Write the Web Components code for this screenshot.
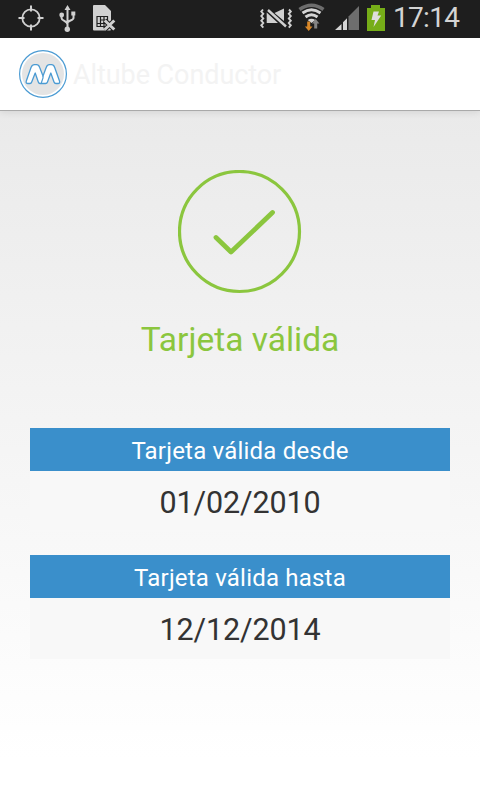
<!DOCTYPE html>
<html lang="es">
<head>
<meta charset="utf-8">
<title>Altube Conductor</title>
<style>
html,body{margin:0;height:100%}
body{font-family:Roboto,"Noto Sans",sans-serif;overflow:hidden}
</style>
</head>
<body>
<conductor-app></conductor-app>
<script>
const define = (name, html) => customElements.define(name, class extends HTMLElement {
  constructor() {
    super();
    this.attachShadow({mode: 'open'}).innerHTML = html;
  }
});

define('status-bar', `
<style>
:host{display:flex;justify-content:space-between;height:38px;background:#1e1e1e;color:#d4d4d4}
svg{display:block;flex:none}
.right{display:flex}
time{font-size:28px;line-height:36px;width:87px;box-sizing:border-box;letter-spacing:-.7px;white-space:nowrap}
</style>
<svg width="130" height="38" viewBox="0 0 130 38" fill="none" stroke="#d0d0d0">
  <circle cx="31" cy="18" r="8.700" stroke-width="1.800"/>
  <path d="M31 5.500v6M31 24.500v6M18.500 18h6M37.500 18h6" stroke-width="2"/>
  <path d="M67.500 9v20M61.500 15v3c0 3 6 3 6 6.500M73.500 14v4c0 2.500-6 2.500-6 5" stroke-width="2"/>
  <path d="M67.500 5l3 5h-6zM71.300 11.500h4v4h-4z" fill="#d0d0d0" stroke="none"/>
  <circle cx="61.700" cy="15" r="2.400" fill="#d0d0d0" stroke="none"/>
  <circle cx="67.300" cy="29.300" r="2.700" fill="#d0d0d0" stroke="none"/>
  <path d="M93 6q0-1 1-1h11l6 6v18q0 1.500-1 1.500H94q-1 0-1-1z" fill="#d0d0d0" stroke="none"/>
  <path d="M97 16.500h10.500v10H97zM100.500 16.500v10M104 16.500v10M100.500 20h7M97 23.500h10" stroke="#1e1e1e" stroke-width="1.200"/>
  <path d="M104.800 20.500l9.500 9M114.300 20.500l-9.500 9" stroke="#1e1e1e" stroke-width="5"/>
  <path d="M104.800 20.500l9.500 9M114.300 20.500l-9.500 9" stroke="#d0d0d0" stroke-width="3"/>
</svg>
<div class="right">
<svg width="136" height="38" viewBox="257 0 136 38" fill="none">
  <path d="M263 9.500l-1.700 2 2 2.300-2 2.300 2 2.300-2 2.300 2 2.300-2 2.300 2 2.400M289 9.500l1.800 2-2 2.300 2 2.300-2 2.300 2 2.300-2 2.300 2 2.300-2 2.400" stroke="#cfcfcf" stroke-width="1.900"/>
  <path d="M268 10l18 16.500" stroke="#d0d0d0" stroke-width="2.400"/>
  <path d="M266.700 12.500l11.300 10.500h-11.300zM274.500 13l9.500-4.500v12.500z" fill="#d0d0d0"/>
  <path d="M299.500 9.500Q311.500 1 323.500 9.500" stroke="#6d6d6d" stroke-width="3.600"/>
  <path d="M302.500 13Q311.500 6.500 320.500 13M305.500 17Q311.500 12.500 317.500 17" stroke="#d4d4d4" stroke-width="2.900"/>
  <path d="M307.700 20q3.800-2.700 7.600 0L311.500 23z" fill="#d4d4d4"/>
  <path d="M307.200 21.500h3v5h2.300l-3.800 4.500-3.800-4.500h2.300z" fill="#d98828"/>
  <path d="M314.200 28.500h3v-5h2.200l-3.700-4.500-3.700 4.500h2.200z" fill="#858585"/>
  <path d="M348.500 16.500L359 6v24h-10.500z" fill="#6e6e6e"/>
  <path d="M335 30l6.500-6v6zM343 22.300l4-4V30h-4z" fill="#d4d4d4"/>
  <path d="M371 5h9v3h5v23h-18V8h4z" fill="#76ad18"/>
  <path d="M373.500 11.500h5.500l-1.500 4h3.700l-7.700 11.500 1.500-7h-3.500z" fill="#dedede"/>
</svg>
<time>17:14</time>
</div>`);

define('app-logo', `
<style>:host{display:block;width:48px;height:48px}svg{display:block}</style>
<svg width="48" height="48" viewBox="0 0 48 48">
  <circle cx="24" cy="24" r="23.400" fill="#fff" stroke="#4b9bd3" stroke-width="1.200"/>
  <circle cx="24" cy="24" r="21" fill="#e4e4e4"/>
  <path d="M9 33.500Q6.500 33.500 7.300 31L12 17.500Q13.200 14.700 15.500 14.700H17.500Q19.700 14.700 20.700 17.500L24 26L27.200 17.500Q28.200 14.700 30.500 14.700H32.500Q34.700 14.700 35.700 17.500L40.500 31Q41.200 33.500 39 33.500H37Q35.500 33.500 35 32L31.800 23L28.500 32Q28 33.500 26.500 33.500H21Q19.800 33.500 19.300 32L16.200 23L12.700 32Q12.200 33.500 11 33.500Z" fill="#fff" stroke="#4b9bd3" stroke-width="1.300" stroke-linejoin="round"/>
  <path d="M24 26V28L22.300 33" stroke="#4b9bd3" stroke-width="1.200" fill="none"/>
</svg>`);

define('action-bar', `
<style>
:host{display:flex;align-items:center;height:72px;padding-left:19px;background:#fff;border-bottom:1px solid #a9a9a9;box-shadow:0 1px 8px #0000001c;position:relative}
status-bar{position:relative}
h1{font-size:27px;font-weight:400;color:#f3f3f3;margin:2px 0 0 6px;line-height:32px;letter-spacing:-.07px;white-space:nowrap}
</style>
<app-logo></app-logo><h1><slot></slot></h1>`);

define('valid-status', `
<style>
:host{display:flex;flex-direction:column;align-items:center;color:#8bc63e}
svg{display:block}
h2{font-size:33.500px;line-height:40px;font-weight:400;margin:26px 0 0;white-space:nowrap}
</style>
<svg width="124" height="124" viewBox="0 0 124 124" fill="none" stroke="#8bc63e">
  <circle cx="61.500" cy="61.500" r="60" stroke-width="3.200"/>
  <path d="M38 67.500L53 82L94.500 42.500" stroke-width="4.800" stroke-linecap="round" stroke-linejoin="round"/>
</svg>
<h2><slot></slot></h2>`);

define('date-card', `
<style>
:host{display:block;background:#f8f8f8;text-align:center}
header{height:43px;line-height:46px;background:#3a8fcb;color:#fff;font-size:24px;letter-spacing:.2px}
div{height:61px;line-height:64px;color:#333;font-size:30.500px;letter-spacing:-.15px}
</style>
<header><slot name="label"></slot></header><div><slot></slot></div>`);

define('conductor-app', `
<style>
:host{display:flex;flex-direction:column;width:480px;height:800px}
status-bar{position:relative;z-index:1}
main{flex:1;box-sizing:border-box;padding:59px 30px 0;background:linear-gradient(#eaeaea,#fff 94%)}
.cards{display:grid;gap:23px;margin-top:68px}
</style>
<status-bar></status-bar>
<action-bar>Altube Conductor</action-bar>
<main>
  <valid-status>Tarjeta válida</valid-status>
  <div class="cards">
    <date-card><span slot="label">Tarjeta válida desde</span>01/02/2010</date-card>
    <date-card><span slot="label">Tarjeta válida hasta</span>12/12/2014</date-card>
  </div>
</main>`);
</script>
</body>
</html>
